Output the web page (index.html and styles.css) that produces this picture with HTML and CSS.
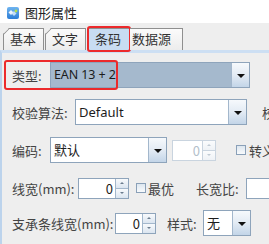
FILE: index.html
```html
<!DOCTYPE html>
<html lang="zh">
<head>
<meta charset="utf-8">
<title>图形属性</title>
<link rel="stylesheet" href="styles.css">
</head>
<body>
<div class="window">
  <div class="titlebar">
    <svg class="app-icon" width="12" height="12" viewBox="0 0 12 12">
      <defs>
        <linearGradient id="ig" x1="0" y1="0" x2="0" y2="1">
          <stop offset="0" stop-color="#6fb4f0"/>
          <stop offset="1" stop-color="#2c7dd6"/>
        </linearGradient>
      </defs>
      <rect x="0" y="0" width="12" height="12" rx="2" fill="url(#ig)"/>
      <path d="M4 3 L6.5 5.5 L4 8 L1.5 5.5 Z" fill="#ffffff" opacity="0.9"/>
      <path d="M7 4 L9.5 6.5 L7 9 L4.5 6.5 Z" fill="#cfe6fb" opacity="0.9"/>
      <circle cx="9" cy="4" r="1.4" fill="#b7e04a"/>
    </svg>
    <span class="title">图形属性</span>
  </div>
  <div class="tabs">
    <div class="tab">基本</div>
    <div class="tab">文字</div>
    <div class="tab selected">条码<span class="mark mark-tab"></span></div>
    <div class="tab wide">数据源</div>
  </div>
  <div class="panel">
    <div class="row row1">
      <span class="label w38">类型:</span>
      <div class="combo sel w200"><span class="combo-text latin small">EAN 13 + 2</span><span class="arrow-btn"><i class="tri"></i></span></div>
      <span class="mark mark-row"></span>
    </div>
    <div class="row row2">
      <span class="label w63">校验算法:</span>
      <div class="combo w172"><span class="combo-text latin">Default</span><span class="arrow-btn"><i class="tri"></i></span></div>
      <span class="label cut15">校验位</span>
    </div>
    <div class="row row3">
      <span class="label w38">编码:</span>
      <div class="combo w117"><span class="combo-text">默认</span><span class="arrow-btn"><i class="tri"></i></span></div>
      <div class="spinner disabled w44 ml5"><span class="spin-field">0</span><span class="spin-btns"><i class="up"></i><i class="down"></i></span></div>
      <span class="check ml20"></span>
      <span class="label ml3">转义</span>
    </div>
    <div class="row row4">
      <span class="label w66">线宽(mm):</span>
      <div class="spinner w51"><span class="spin-field">0</span><span class="spin-btns"><i class="up"></i><i class="down"></i></span></div>
      <span class="check ml7"></span>
      <span class="label ml2 w48">最优</span>
      <span class="label w50">长宽比:</span>
      <div class="field"><span class="peek">0</span></div>
    </div>
    <div class="row row5">
      <span class="label w103">支承条线宽(mm):</span>
      <div class="spinner w41"><span class="spin-field">0</span><span class="spin-btns"><i class="up"></i><i class="down"></i></span></div>
      <span class="label ml11 w36">样式:</span>
      <div class="combo w48"><span class="combo-text">无</span><span class="arrow-btn"><i class="tri"></i></span></div>
      <span class="label ml15">Ⅰ</span>
    </div>
  </div>
</div>
</body>
</html>
```
FILE: styles.css
```css
html, body {
  margin: 0;
  padding: 0;
}
body {
  width: 269px;
  height: 244px;
  overflow: hidden;
  background: #eeeeee;
  font-family: "Noto Sans CJK SC", "Liberation Sans", sans-serif;
  color: #3a3a3a;
}
.window {
  position: relative;
  width: 269px;
  height: 244px;
  overflow: hidden;
}
.titlebar {
  height: 23px;
  background: #ffffff;
  display: flex;
  align-items: center;
  padding-left: 7px;
  box-sizing: border-box;
}
.app-icon {
  display: block;
  margin-top: 2px;
}
.title {
  margin-left: 6px;
  font-size: 13px;
  color: #222;
  line-height: 1;
  margin-top: 2px;
}
.tabs {
  height: 27px;
  display: flex;
  align-items: flex-end;
  padding-left: 3px;
  box-sizing: border-box;
  white-space: nowrap;
}
.tab {
  position: relative;
  width: 41px;
  height: 22px;
  box-sizing: border-box;
  border: 1px solid #8f8f8f;
  border-bottom: none;
  background: linear-gradient(#fbfbfb, #ececec);
  font-size: 13px;
  line-height: 20px;
  padding-left: 6px;
  color: #333;
  clip-path: polygon(6px 0, 100% 0, 100% 100%, 0 100%, 0 6px);
}
.tab::before {
  content: "";
  position: absolute;
  left: -1px;
  top: 5px;
  width: 9px;
  height: 1px;
  background: #8f8f8f;
  transform: rotate(-45deg);
  transform-origin: 0 0;
}
.tab + .tab {
  margin-left: 1px;
}
.tab.selected {
  width: 42px;
  height: 22px;
  margin-left: 2px;
  background: #c8dcf2;
  clip-path: none;
  padding-left: 6px;
  overflow: visible;
}
.tab.selected::before {
  display: none;
}
.tab.wide {
  width: 53px;
  margin-left: 0;
  clip-path: none;
  padding-left: 2px;
  border-left: none;
}
.tab.wide::before {
  display: none;
}
.mark {
  position: absolute;
  border: 2px solid #ec2a2c;
  border-radius: 3px;
  box-sizing: border-box;
  pointer-events: none;
}
.mark-tab {
  left: -2px;
  top: -3px;
  width: 44px;
  height: 26px;
}
.panel {
  height: 194px;
  box-sizing: border-box;
  border-top: 3px solid #cddff3;
  border-left: 2px solid #bcd3ec;
  padding-top: 9px;
}
.row {
  position: relative;
  display: flex;
  align-items: center;
  height: 26px;
  padding-left: 10px;
  white-space: nowrap;
}
.row2 { margin-top: 11px; }
.row3 { margin-top: 12px; }
.row4 { margin-top: 12px; }
.row5 { margin-top: 9px; }
.mark-row {
  left: 2px;
  top: -2px;
  width: 114px;
  height: 30px;
}
.label {
  font-size: 13px;
  color: #444;
  flex: none;
  line-height: 1;
}
.w38 { width: 38px; }
.w63 { width: 63px; }
.w66 { width: 66px; }
.w103 { width: 103px; }
.w48 { width: 48px; }
.w50 { width: 50px; }
.w36 { width: 36px; }
.ml2 { margin-left: 2px; }
.ml3 { margin-left: 3px; }
.ml5 { margin-left: 5px; }
.ml7 { margin-left: 7px; }
.ml11 { margin-left: 11px; }
.ml15 { margin-left: 15px; }
.ml20 { margin-left: 20px; }
.cut15 { margin-left: 15px; }
.combo {
  flex: none;
  height: 26px;
  box-sizing: border-box;
  border: 1px solid #8ea4bb;
  background: #ffffff;
  display: flex;
  align-items: stretch;
}
.combo.sel {
  background: #a5b9cd;
}
.w200 { width: 200px; }
.w172 { width: 172px; }
.w117 { width: 117px; }
.combo-text {
  flex: 1;
  font-size: 13px;
  color: #1c1c1c;
  padding-left: 3px;
  line-height: 24px;
}
.latin {
  font-family: "Noto Sans", "Liberation Sans", sans-serif;
}
.combo-text.small {
  font-size: 12.5px;
  letter-spacing: -0.1px;
}
.arrow-btn {
  flex: none;
  width: 17px;
  border-left: 1px solid #a3b7cc;
  background: linear-gradient(#f6f9fc, #e3ebf4 50%, #c3d5e8);
  display: flex;
  align-items: center;
  justify-content: center;
}
.tri {
  width: 0;
  height: 0;
  border-left: 4px solid transparent;
  border-right: 4px solid transparent;
  border-top: 4px solid #111;
  margin-top: 1px;
}
.spinner {
  flex: none;
  height: 21px;
  box-sizing: border-box;
  border: 1px solid #8ea4bb;
  background: #fff;
  display: flex;
}
.w44 { width: 44px; }
.w51 { width: 51px; }
.w41 { width: 41px; }
.spin-field {
  flex: 1;
  text-align: right;
  font-size: 13px;
  line-height: 19px;
  padding-right: 2px;
  color: #1c1c1c;
}
.spin-btns {
  flex: none;
  width: 12px;
  display: flex;
  flex-direction: column;
  border-left: 1px solid #a3b7cc;
}
.spin-btns i {
  flex: 1;
  display: flex;
  align-items: center;
  justify-content: center;
  background: linear-gradient(#f8fafc, #dbe5f0);
}
.spin-btns i + i {
  border-top: 1px solid #a3b7cc;
}
.spin-btns .up::after {
  content: "";
  border-left: 2px solid transparent;
  border-right: 2px solid transparent;
  border-bottom: 2px solid #6b7c8e;
}
.spin-btns .down::after {
  content: "";
  border-left: 2px solid transparent;
  border-right: 2px solid transparent;
  border-top: 2px solid #6b7c8e;
}
.spinner.disabled {
  border-color: #c9d4df;
}
.spinner.disabled .spin-field {
  color: #b3bfcb;
}
.spinner.disabled .spin-btns {
  border-left-color: #c9d4df;
}
.spinner.disabled .spin-btns i {
  background: linear-gradient(#fbfcfd, #eef2f6);
}
.spinner.disabled .spin-btns i + i {
  border-top-color: #c9d4df;
}
.spinner.disabled .spin-btns i::after {
  border-top-color: #c0cad4;
  border-bottom-color: #c0cad4;
}
.check {
  flex: none;
  width: 10px;
  height: 10px;
  box-sizing: border-box;
  border: 1px solid #8aa0b8;
  background: linear-gradient(#dde6ef, #f8fafc);
}
.field {
  flex: none;
  width: 40px;
  height: 21px;
  box-sizing: border-box;
  border: 1px solid #8ea4bb;
  border-right: none;
  background: #fff;
  text-align: right;
  font-size: 13px;
  line-height: 19px;
  color: #1c1c1c;
  overflow: hidden;
}
.peek {
  position: relative;
  right: -4px;
}
```
